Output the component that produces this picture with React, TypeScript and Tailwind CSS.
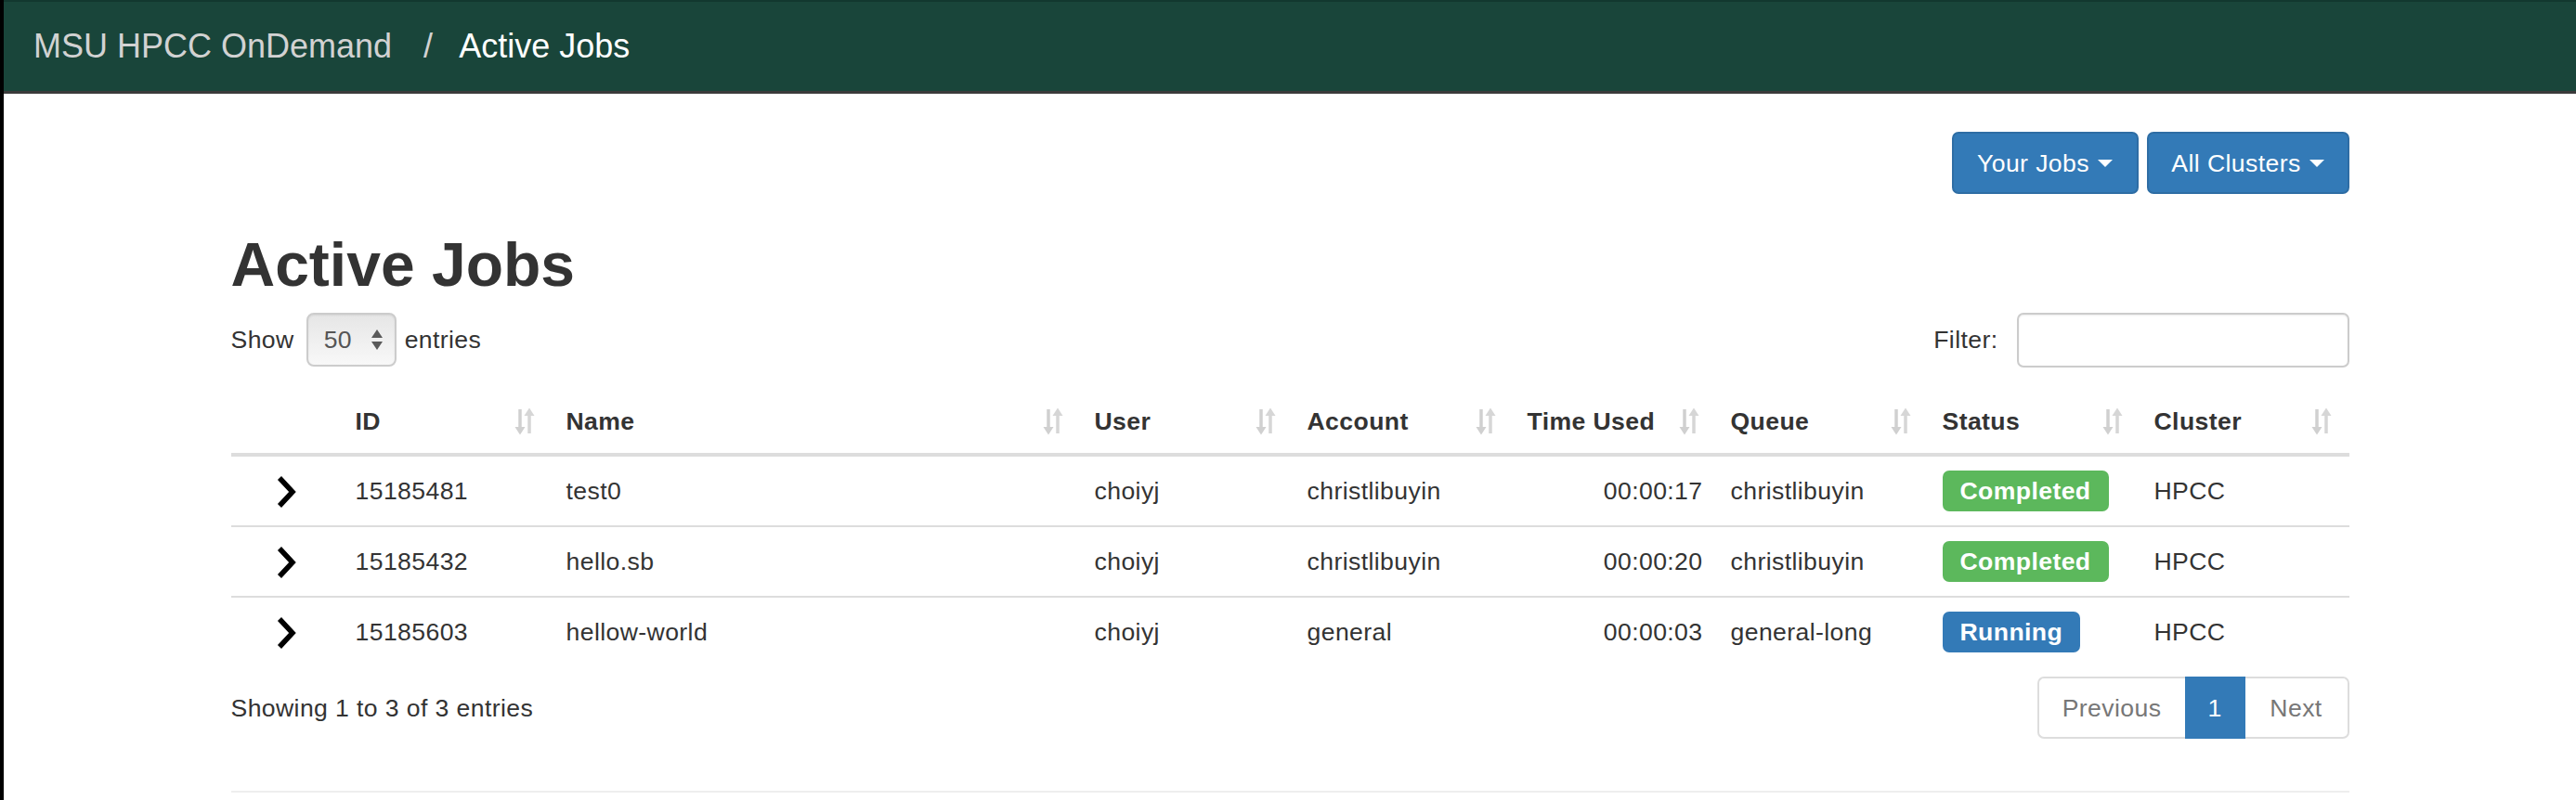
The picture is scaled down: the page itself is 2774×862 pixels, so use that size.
import React from 'react'

const COLS = [
  { label: '', width: 119 },
  { label: 'ID', width: 227 },
  { label: 'Name', width: 569 },
  { label: 'User', width: 229 },
  { label: 'Account', width: 237 },
  { label: 'Time Used', width: 219 },
  { label: 'Queue', width: 228 },
  { label: 'Status', width: 228 },
  { label: 'Cluster', width: 225 },
]

const JOBS = [
  { id: '15185481', name: 'test0', user: 'choiyj', account: 'christlibuyin', time: '00:00:17', queue: 'christlibuyin', status: 'Completed', cluster: 'HPCC' },
  { id: '15185432', name: 'hello.sb', user: 'choiyj', account: 'christlibuyin', time: '00:00:20', queue: 'christlibuyin', status: 'Completed', cluster: 'HPCC' },
  { id: '15185603', name: 'hellow-world', user: 'choiyj', account: 'general', time: '00:00:03', queue: 'general-long', status: 'Running', cluster: 'HPCC' },
]

function SortIcon() {
  return (
    <svg width="22" height="32" viewBox="0 0 22 32" className="absolute right-[19px] top-1/2 -translate-y-1/2">
      {/* down arrow */}
      <line x1="6" y1="3" x2="6" y2="24" stroke="#d0d0d0" strokeWidth="3.5" />
      <polygon points="0.5,22 11.5,22 6,30.5" fill="#d0d0d0" />
      {/* up arrow */}
      <line x1="16" y1="8" x2="16" y2="29" stroke="#d6d6d6" strokeWidth="3.5" />
      <polygon points="10.5,10 21.5,10 16,1.5" fill="#d6d6d6" />
    </svg>
  )
}

function Chevron() {
  return (
    <svg width="22" height="36" viewBox="0 0 22 36" className="inline-block align-middle">
      <polyline points="4,3 18,18 4,33" fill="none" stroke="#000" strokeWidth="5.5" strokeLinejoin="miter" />
    </svg>
  )
}

function Caret() {
  return <span className="ml-[9px] inline-block h-0 w-0 border-x-[8px] border-t-[8px] border-x-transparent border-t-white" />
}

function StatusBadge({ status }: { status: string }) {
  const color = status === 'Running' ? 'bg-[#337ab7]' : 'bg-[#5cb85c]'
  return (
    <span className={`inline-flex h-[44px] items-center rounded-[7px] px-[19px] font-bold leading-none text-white ${color}`}>
      {status}
    </span>
  )
}

export default function App() {
  return (
    <div className="h-[862px] w-full overflow-hidden border-l-4 border-black bg-white font-['Liberation_Sans',Arial,sans-serif] text-[26.6px] leading-[38px] tracking-[0.4px] text-[#333]">
      {/* Navbar */}
      <nav className="flex h-[101px] items-center border-t-2 border-b-[3px] border-t-[#12382f] border-b-[#3b3b3b] bg-[#19453a] pl-[32px] text-[36px] tracking-normal">
        <span className="text-[#d2d2d2]">MSU HPCC OnDemand</span>
        <span className="ml-[34px] mr-[28px] text-[#d2d2d2]">/</span>
        <span className="text-white">Active Jobs</span>
      </nav>

      <div className="mx-auto w-[2281px]">
        {/* Filter buttons */}
        <div className="mt-[41px] flex justify-end gap-[9px]">
          <button className="flex h-[67px] w-[201px] items-center justify-center rounded-[7px] border-2 border-[#2e6da4] bg-[#337ab7] text-white">
            Your Jobs
            <Caret />
          </button>
          <button className="flex h-[67px] w-[218px] items-center justify-center rounded-[7px] border-2 border-[#2e6da4] bg-[#337ab7] text-white">
            All Clusters
            <Caret />
          </button>
        </div>

        <h1 className="mt-[40px] text-[66px] font-bold leading-[72px] tracking-normal text-[#333]">Active Jobs</h1>

        {/* Length + filter */}
        <div className="mt-[15px] flex h-[60px] items-center justify-between">
          <div className="flex items-center">
            <span>Show</span>
            <div className="ml-[13px] mr-[9px] flex h-[58px] w-[97px] items-center justify-between rounded-[8px] border-2 border-[#cccccc] bg-gradient-to-b from-[#e6e6e6] to-[#f8f8f8] pl-[17px] pr-[12px] text-[#555] shadow-[inset_0_1px_2px_rgba(0,0,0,0.08)]">
              <span>50</span>
              <svg width="14" height="24" viewBox="0 0 14 24">
                <polygon points="7,1 13,10 1,10" fill="#5a5a5a" />
                <polygon points="1,14 13,14 7,23" fill="#5a5a5a" />
              </svg>
            </div>
            <span>entries</span>
          </div>
          <div className="flex items-center">
            <span className="mr-[20px]">Filter:</span>
            <input
              type="text"
              className="h-[59px] w-[358px] rounded-[7px] border-2 border-[#cccccc] bg-white px-[20px] shadow-[inset_0_1px_2px_rgba(0,0,0,0.08)] outline-none"
            />
          </div>
        </div>

        {/* Table */}
        <table className="mt-[24px] w-full table-fixed border-separate border-spacing-0">
          <colgroup>
            {COLS.map((c, i) => (
              <col key={i} style={{ width: c.width }} />
            ))}
          </colgroup>
          <thead>
            <tr>
              {COLS.map((c, i) => (
                <th key={i} className="relative border-b-4 border-[#dddddd] px-[15px] py-[15px] text-left font-bold">
                  {c.label}
                  {i > 0 && <SortIcon />}
                </th>
              ))}
            </tr>
          </thead>
          <tbody>
            {JOBS.map((job, r) => {
              const td = `px-[15px] py-[15px] align-middle ${r > 0 ? 'border-t-2 border-[#dddddd]' : ''}`
              return (
                <tr key={job.id}>
                  <td className={`${td} text-center`}>
                    <Chevron />
                  </td>
                  <td className={td}>{job.id}</td>
                  <td className={td}>{job.name}</td>
                  <td className={td}>{job.user}</td>
                  <td className={td}>{job.account}</td>
                  <td className={`${td} text-right`}>{job.time}</td>
                  <td className={td}>{job.queue}</td>
                  <td className={td}>
                    <StatusBadge status={job.status} />
                  </td>
                  <td className={td}>{job.cluster}</td>
                </tr>
              )
            })}
          </tbody>
        </table>

        {/* Info + pagination */}
        <div className="mt-[11px] flex h-[67px] items-center justify-between">
          <span>Showing 1 to 3 of 3 entries</span>
          <div className="flex h-[67px]">
            <span className="flex w-[159px] items-center justify-center rounded-l-[7px] border-2 border-r-0 border-[#dddddd] text-[#777]">
              Previous
            </span>
            <span className="flex w-[65px] items-center justify-center bg-[#337ab7] text-white">1</span>
            <span className="flex w-[112px] items-center justify-center rounded-r-[7px] border-2 border-l-0 border-[#dddddd] text-[#777]">
              Next
            </span>
          </div>
        </div>

        <hr className="mt-[56px] border-t-2 border-[#eeeeee]" />
      </div>
    </div>
  )
}
